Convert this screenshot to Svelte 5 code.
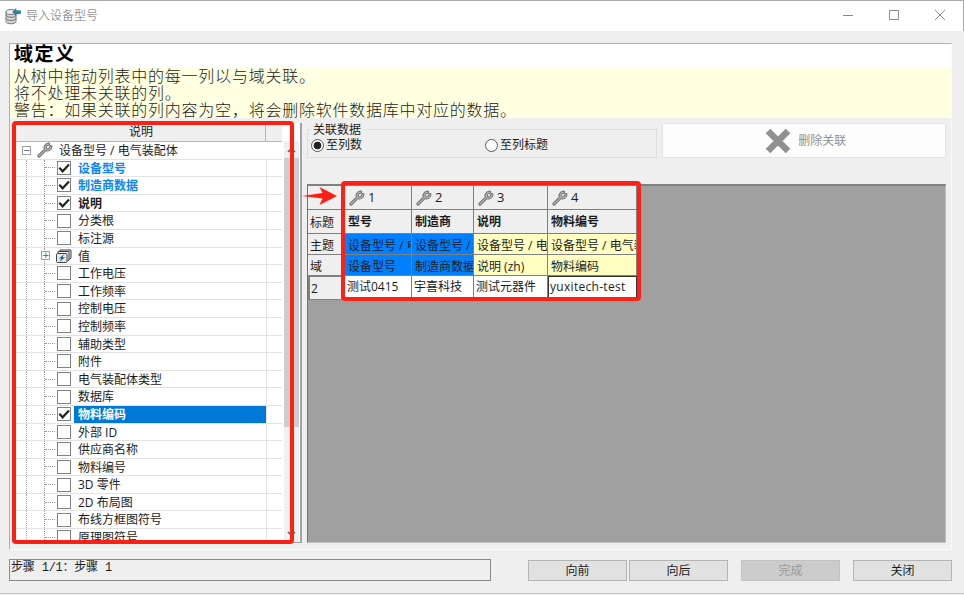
<script lang="ts">
  interface Field {
    label: string;
    checked?: boolean;
    linked?: boolean;
    bold?: boolean;
    selected?: boolean;
    group?: boolean;
  }

  interface Column {
    title: string;
    subject: string;
    field: string;
    value: string;
    linked?: boolean;
  }

  const fields: Field[] = [
    { label: '设备型号', checked: true, linked: true, bold: true },
    { label: '制造商数据', checked: true, linked: true, bold: true },
    { label: '说明', checked: true, bold: true },
    { label: '分类根' },
    { label: '标注源' },
    { label: '值', group: true },
    { label: '工作电压' },
    { label: '工作频率' },
    { label: '控制电压' },
    { label: '控制频率' },
    { label: '辅助类型' },
    { label: '附件' },
    { label: '电气装配体类型' },
    { label: '数据库' },
    { label: '物料编码', checked: true, bold: true, selected: true },
    { label: '外部 ID' },
    { label: '供应商名称' },
    { label: '物料编号' },
    { label: '3D 零件' },
    { label: '2D 布局图' },
    { label: '布线方框图符号' },
    { label: '原理图符号' }
  ];

  const subject = '设备型号 / 电气装配体';
  const columns: Column[] = [
    { title: '型号', subject, field: '设备型号', value: '测试0415', linked: true },
    { title: '制造商', subject, field: '制造商数据', value: '宇喜科技', linked: true },
    { title: '说明', subject, field: '说明 (zh)', value: '测试元器件' },
    { title: '物料编号', subject, field: '物料编码', value: 'yuxitech-test' }
  ];

  let mode = $state('index');
</script>

{#snippet wrench()}
  <svg class="wrench" viewBox="0 0 16 16" width="16" height="16">
    <g fill="none" stroke-linecap="round" stroke-linejoin="round">
      <path d="M2 14 8.600 7.400M11.600 2.200C8.400 2.600 7.400 5.400 8.600 7.400C10.600 8.600 13.600 7.600 13.900 4.700" stroke="#707070" stroke-width="3.200" />
      <path d="M2 14 8.600 7.400M11.600 2.200C8.400 2.600 7.400 5.400 8.600 7.400C10.600 8.600 13.600 7.600 13.900 4.700" stroke="#b4b4b4" stroke-width="1.300" />
    </g>
  </svg>
{/snippet}

<div class="window">
  <header class="titlebar">
    <svg class="app-icon" viewBox="0 0 17 17" width="17" height="17">
      <path d="M1 4v9.500c0 3 10 3 10 0V4" fill="#d4d4d4" stroke="#777" />
      <ellipse cx="6" cy="4" rx="5" ry="2.400" fill="#f2f2f2" stroke="#777" />
      <path d="M1.200 7.200c0 2.800 9.600 2.800 9.600 0M1.200 10.400c0 2.800 9.600 2.800 9.600 0" fill="none" stroke="#777" />
      <path d="M7.500 4 11 .8v1.900h4.500v3H11v1.600z" fill="#2e7fa8" stroke="#256988" stroke-width=".6" />
    </svg>
    <span class="title">导入设备型号</span>
    <div class="window-buttons">
      <svg viewBox="0 0 12 12" width="12" height="12"><path d="M1 6.500h10" /></svg>
      <svg viewBox="0 0 12 12" width="12" height="12"><path d="M1.500 1.500h9v9h-9z" /></svg>
      <svg viewBox="0 0 12 12" width="12" height="12"><path d="M1 1l10 10M11 1 1 11" /></svg>
    </div>
  </header>

  <main class="page">
    <h1>域定义</h1>
    <div class="help">
      <p>从树中拖动列表中的每一列以与域关联。</p>
      <p>将不处理未关联的列。</p>
      <p>警告：如果关联的列内容为空，将会删除软件数据库中对应的数据。</p>
    </div>

    <div class="content">
      <section class="tree">
        <div class="tree-main">
          <div class="tree-header"><span>说明</span></div>
          <div class="tree-row root">
            <span class="expander">−</span>
            <span class="root-icon">{@render wrench()}</span>
            <span class="label">{subject}</span>
          </div>
          {#each fields as field}
            <div class="tree-row">
              <span class="guide"></span>
              <span class="branch" class:has-expander={field.group}>
                {#if field.group}<span class="expander">+</span>{/if}
              </span>
              {#if field.group}
                <svg class="group-icon" viewBox="0 0 17 14" width="17" height="14">
                  <path d="M5 3V1h11v8l-3 3" fill="#ddd" stroke="#444" />
                  <path d="M3 4.500V2.500h11v8l-2 2" fill="#eee" stroke="#444" />
                  <rect x="1.500" y="4.500" width="10.500" height="9" rx="1" fill="#e4e8ea" stroke="#444" />
                  <path d="M9 5.300 4 9.500h2.300l-1.500 3.300 5.200-4.500H7.600z" fill="#17658a" />
                </svg>
              {:else}
                <span class="checkbox">
                  {#if field.checked}
                    <svg viewBox="0 0 12 12" width="12" height="12">
                      <path d="M1.300 5.800 4.600 9.300 11 2.500" fill="none" stroke="#222" stroke-width="2.200" />
                    </svg>
                  {/if}
                </span>
              {/if}
              <span
                class="label"
                class:bold={field.bold}
                class:linked={field.linked}
                class:selected={field.selected}>{field.label}</span
              >
              <span class="rest"></span>
            </div>
          {/each}
        </div>
        <div class="scrollbar">
          <svg viewBox="0 0 9 6" width="9" height="6"><path d="M1 5 4.500 1.500 8 5" /></svg>
          <div class="thumb"></div>
          <svg viewBox="0 0 9 6" width="9" height="6"><path d="M1 1 4.500 4.500 8 1" /></svg>
        </div>
        <div class="marker tree-marker"></div>
      </section>

      <section class="mapping">
        <div class="toolbar">
          <fieldset>
            <legend>关联数据</legend>
            <button class="radio" onclick={() => (mode = 'index')}>
              <i class:on={mode === 'index'}></i>至列数
            </button>
            <button class="radio" onclick={() => (mode = 'title')}>
              <i class:on={mode === 'title'}></i>至列标题
            </button>
          </fieldset>
          <button class="remove" disabled>
            <svg viewBox="0 0 26 26" width="26" height="26">
              <path d="M3 3l20 20M23 3 3 23" stroke="#909090" stroke-width="6.500" />
            </svg>
            删除关联
          </button>
        </div>

        <div class="grid">
          <div class="grid-col heads">
            <div class="cell num"></div>
            <div class="cell name">标题</div>
            <div class="cell subject">主题</div>
            <div class="cell field">域</div>
            <div class="cell value">2</div>
          </div>
          {#each columns as column, i}
            <div class="grid-col" class:linked={column.linked}>
              <div class="cell num">{@render wrench()}{i + 1}</div>
              <div class="cell name">{column.title}</div>
              <div class="cell subject">{column.subject}</div>
              <div class="cell field">{column.field}</div>
              <div class="cell value">{column.value}</div>
            </div>
          {/each}
          <div class="marker grid-marker"></div>
          <svg class="arrow" viewBox="0 0 36 20" width="36" height="20">
            <path d="M0 10 20.500 7 17.500 1 35 10 17.500 19 20.500 12.500z" fill="#ff2015" />
          </svg>
        </div>
      </section>
    </div>
  </main>

  <footer>
    <div class="status">步骤 1/1：步骤 1</div>
    <button>向前</button>
    <button>向后</button>
    <button class="finish" disabled>完成</button>
    <button>关闭</button>
  </footer>
</div>

<style>
  :global(body) {
    overflow: hidden;
    background: #efefef;
  }

  .window {
    box-sizing: border-box;
    width: 964px;
    height: 594px;
    border-bottom: 1px solid #c4c4c4;
    background: #efefef;
    color: #1c1c1c;
    font: 12px/16px 'Open Sans', 'Noto Sans CJK SC', sans-serif;
    display: flex;
    flex-direction: column;
  }

  button {
    font: inherit;
    color: inherit;
  }

  .titlebar {
    box-sizing: border-box;
    height: 31px;
    border-top: 1px solid #a9a9a9;
    border-right: 1px solid #a9a9a9;
    background: #fff;
    display: flex;
    align-items: center;
    padding: 0 17px 0 5px;
    color: #6c6c6c;
  }

  .title {
    margin-left: 4px;
    font-weight: 300;
  }

  .window-buttons {
    margin: -2px 0 0 auto;
    display: flex;
    gap: 34px;
  }

  .window-buttons path {
    fill: none;
    stroke: #888;
  }

  .page {
    box-sizing: border-box;
    width: 943px;
    height: 507px;
    margin: 12px 0 0 9px;
    border: 1px solid #fafafa;
    border-top-color: #b0b0b0;
    border-left-color: #b0b0b0;
    flex: none;
  }

  h1 {
    height: 24px;
    margin: 0;
    padding-left: 4px;
    background: #fff;
    color: #000;
    font: bold 19px/18px 'Noto Sans CJK SC', sans-serif;
    letter-spacing: 1.5px;
  }

  .help {
    display: flow-root;
    height: 50px;
    padding-left: 4px;
    background: #ffffe1;
    color: #222;
    font: 300 16px/17px 'Noto Sans CJK SC', sans-serif;
    letter-spacing: 0.76px;
  }

  .help p {
    margin: 0;
  }

  .help p:first-child {
    margin-top: -1px;
  }

  .content {
    display: flex;
    padding: 5px 0 0 5px;
  }

  .tree {
    position: relative;
    display: flex;
    width: 285px;
    height: 419px;
    border-right: 2px solid #a3a3ad;
    border-bottom: 1px solid #a0a0a0;
    background: #fff;
    margin-right: 5px;
  }

  .tree-main {
    width: 267px;
    height: 417px;
    overflow: hidden;
    flex: none;
  }

  .tree-header {
    box-sizing: border-box;
    height: 19px;
    padding-right: 16px;
    background: #efefef;
    border-bottom: 1px solid #b5b5b5;
    line-height: 18px;
    text-align: center;
  }

  .tree-header span {
    display: block;
    padding-left: 2px;
    border-right: 1px solid #b5b5b5;
  }

  .tree-row {
    box-sizing: border-box;
    height: 17.6px;
    border-bottom: 1px solid #e2e2e2;
    display: flex;
    align-items: center;
  }

  .root {
    padding-left: 7px;
  }

  .root-icon {
    display: flex;
    margin: 0 2px 0 6px;
  }

  .expander {
    box-sizing: border-box;
    width: 9px;
    height: 9px;
    border: 1px solid #a0a0a0;
    background: #fff;
    color: #3c5a96;
    font: 9px/7px 'DejaVu Sans', sans-serif;
    text-align: center;
  }

  .guide {
    box-sizing: border-box;
    width: 12px;
    height: 100%;
    border-right: 1px dotted #aaa;
  }

  .branch {
    width: 10px;
    height: 100%;
    margin-left: 17px;
    border-left: 1px dotted #999;
    display: flex;
    align-items: center;
  }

  .branch::before {
    content: '';
    width: 10px;
    border-top: 1px dotted #999;
  }

  .branch.has-expander::before {
    display: none;
  }

  .branch .expander {
    flex: none;
    margin-left: -4px;
  }

  .checkbox {
    box-sizing: border-box;
    width: 14px;
    height: 14px;
    margin: 0 3px 0 2px;
    border: 1px solid #808080;
    background: #fff;
    flex: none;
  }

  .checkbox svg {
    display: block;
  }

  .group-icon {
    margin: 0 2px 0 0;
    flex: none;
  }

  .label {
    box-sizing: border-box;
    height: 100%;
    padding-left: 4px;
    line-height: 17px;
    white-space: nowrap;
  }

  .tree-row:not(.root) .label {
    width: 192px;
  }

  .rest {
    width: 0;
    height: 100%;
    border-left: 1px solid #e2e2e2;
  }

  .label.bold {
    font-weight: bold;
  }

  .label.linked {
    color: #0a84ff;
  }

  .label.selected {
    background: #0078d7;
    color: #fff;
  }

  .scrollbar {
    width: 15px;
    margin: 18px 0 0 2px;
    background: #f0f0f0;
    display: flex;
    flex-direction: column;
    align-items: center;
  }

  .scrollbar path {
    fill: none;
    stroke: #555;
    stroke-width: 1.4;
  }

  .scrollbar svg {
    margin-top: 6px;
  }

  .scrollbar svg:last-child {
    margin: auto 0 5px;
  }

  .thumb {
    width: 15px;
    height: 269px;
    margin-top: 5px;
    background: #cdcdcd;
  }

  .marker {
    position: absolute;
    box-sizing: border-box;
    border: 4px solid #ff2015;
    border-radius: 4px;
  }

  .tree-marker {
    left: -3px;
    top: -2px;
    width: 282px;
    height: 423px;
  }

  .mapping {
    width: 639px;
  }

  .toolbar {
    display: flex;
    height: 35px;
    margin-bottom: 26px;
  }

  fieldset {
    box-sizing: border-box;
    width: 351px;
    height: 35px;
    margin: 0 5px 0 0;
    padding: 0 0 0 3px;
    border: 1px solid #dfdfdf;
    display: flex;
    gap: 123px;
  }

  legend {
    height: 12px;
    padding: 0 2px;
    line-height: 13px;
  }

  .radio {
    height: 20px;
    padding: 0;
    border: 0;
    background: none;
    display: flex;
    align-items: center;
    gap: 2px;
  }

  .radio i {
    box-sizing: border-box;
    width: 13px;
    height: 13px;
    border: 1px solid #555;
    border-radius: 50%;
    background: #fff;
  }

  .radio i.on {
    background: radial-gradient(circle, #222 3.5px, #fff 4.2px);
  }

  .remove {
    width: 284px;
    padding: 0 0 0 3px;
    border: 1px solid #e4e4e4;
    background: #fdfdfd;
    color: #909090;
    display: flex;
    align-items: center;
    justify-content: center;
    gap: 7px;
  }

  .grid {
    position: relative;
    box-sizing: border-box;
    width: 639px;
    height: 359px;
    border: 1px solid #c0c0c0;
    border-top: 2px solid #808080;
    border-left-color: #707070;
    background: #a0a0a0;
    display: flex;
    align-items: flex-start;
  }

  .grid-col {
    width: 74px;
    flex: none;
  }

  .grid-col.heads {
    width: 37px;
  }

  .grid-col:nth-child(2) {
    width: 67px;
  }

  .grid-col:nth-child(3) {
    width: 62px;
  }

  .grid-col:nth-child(5) {
    width: 89px;
  }

  .cell {
    box-sizing: border-box;
    height: 21px;
    padding-left: 3px;
    border-right: 1px solid #808080;
    border-bottom: 1px solid #808080;
    background: #efefef;
    line-height: 23px;
    white-space: nowrap;
    overflow: hidden;
  }

  .heads .cell {
    padding-left: 2px;
  }

  .num {
    height: 24px;
    padding-left: 4px;
    display: flex;
    align-items: center;
    gap: 3px;
    font-size: 13px;
  }

  .name {
    height: 24px;
    font-weight: bold;
  }

  .heads .name {
    font-weight: normal;
    line-height: 25px;
  }

  .grid-col:not(.heads) .subject,
  .grid-col:not(.heads) .field {
    background: #ffffc1;
  }

  .grid-col.linked .subject,
  .grid-col.linked .field {
    background: #0080ff;
  }

  .value {
    height: 24px;
    padding-left: 2px;
    background: #fff;
    line-height: 22px;
  }

  .grid-col:nth-child(5) .value {
    border: 1px solid #333;
    padding-left: 1px;
    line-height: 20px;
    letter-spacing: 0.3px;
  }

  .heads .value {
    padding-left: 1px;
    border: 1px solid #808080;
    border-width: 1px 1px 1px 2px;
    background: #efefef;
    line-height: 24px;
  }

  .grid-marker {
    left: 33px;
    top: -5px;
    width: 300px;
    height: 120px;
  }

  .arrow {
    position: absolute;
    left: -6px;
    top: 0;
  }

  footer {
    display: flex;
    align-items: center;
    padding: 9px 0 0 9px;
  }

  .status {
    box-sizing: border-box;
    width: 482px;
    height: 22px;
    margin-right: 37px;
    padding-left: 1px;
    border: 1px solid #8a8a8a;
    font: 12px/16px 'Liberation Mono', 'Noto Sans CJK SC', monospace;
    letter-spacing: -0.3px;
    word-spacing: 0.5px;
  }

  footer button {
    box-sizing: border-box;
    width: 99px;
    height: 21px;
    margin-right: 2px;
    padding: 0;
    border: 1px solid #b4b4b4;
    background: #e1e1e1;
    line-height: 19px;
  }

  footer .finish {
    margin: 0 13px 0 11px;
    border-color: #c2c2c2;
    background: #ccc;
    color: #999;
  }
</style>
